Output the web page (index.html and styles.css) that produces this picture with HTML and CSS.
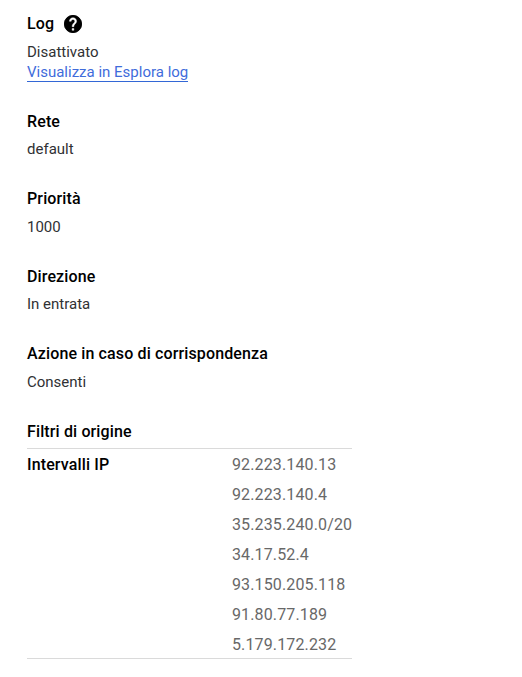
FILE: index.html
```html
<!DOCTYPE html>
<html lang="it">
<head>
<meta charset="utf-8">
<title>Regola firewall</title>
<link rel="stylesheet" href="styles.css">
</head>
<body>
<main class="details">
<section class="field log"><h2>Log <svg class="help" viewBox="2 2 20 20"><path d="M12 2C6.48 2 2 6.48 2 12s4.48 10 10 10 10-4.48 10-10S17.52 2 12 2zm1 17h-2v-2h2v2zm2.07-7.75l-.9.92C13.45 12.9 13 13.500 13 15h-2v-.5c0-1.100.45-2.100 1.170-2.830l1.240-1.260c.37-.36.590-.86.590-1.410 0-1.100-.9-2-2-2s-2 .9-2 2H8c0-2.210 1.790-4 4-4s4 1.790 4 4c0 .88-.36 1.680-.93 2.250z" stroke="#fff" stroke-width=".45"/><circle cx="12" cy="12" r="9.5" fill="none" stroke="#000"/></svg></h2><p>Disattivato</p><a class="link" href="#">Visualizza in Esplora log</a></section>
<section class="field"><h2>Rete</h2><p>default</p></section>
<section class="field"><h2>Priorità</h2><p>1000</p></section>
<section class="field"><h2>Direzione</h2><p>In entrata</p></section>
<section class="field"><h2>Azione in caso di corrispondenza</h2><p>Consenti</p></section>
<section class="filters"><h2>Filtri di origine</h2>
<div class="table"><h3>Intervalli IP</h3>
<ul><li>92.223.140.13</li><li>92.223.140.4</li><li>35.235.240.0/20</li><li>34.17.52.4</li><li>93.150.205.118</li><li>91.80.77.189</li><li>5.179.172.232</li></ul></div></section>
</main>
</body>
</html>
```

FILE: styles.css
```css
body { margin: 0; background: #fff; font-family: Roboto, sans-serif; color: #000; }
.details { padding: 14px 27px 0; }
h2, h3 { margin: 0; font-size: 16px; font-weight: 500; line-height: 20px; letter-spacing: .13px; }
h2 { display: flex; align-items: center; gap: 10px; }
p { margin: 7.5px 0 0; font-size: 15px; font-weight: 400; line-height: 20px; color: #303134; }
.field { margin-bottom: 30px; }
.log { margin-bottom: 29.5px; }
.log p { margin-top: 8px; }
.help { width: 18px; height: 18px; }
.link { display: table; padding-top: 1px; font-size: 15px; line-height: 18px; color: #3f6cdb; text-decoration: none; border-bottom: 1px solid #3367d6; }
.table { display: grid; grid-template-columns: 205px 120px; grid-auto-rows: 208px; width: 325px; padding-top: 1px; margin-top: 6.5px; border-top: 1px solid #dadada; border-bottom: 1px solid #dadada; }
h3 { line-height: 30px; }
ul { list-style: none; margin: 0; padding: 0; font-size: 16px; line-height: 30px; letter-spacing: .13px; color: #686868; }
```
